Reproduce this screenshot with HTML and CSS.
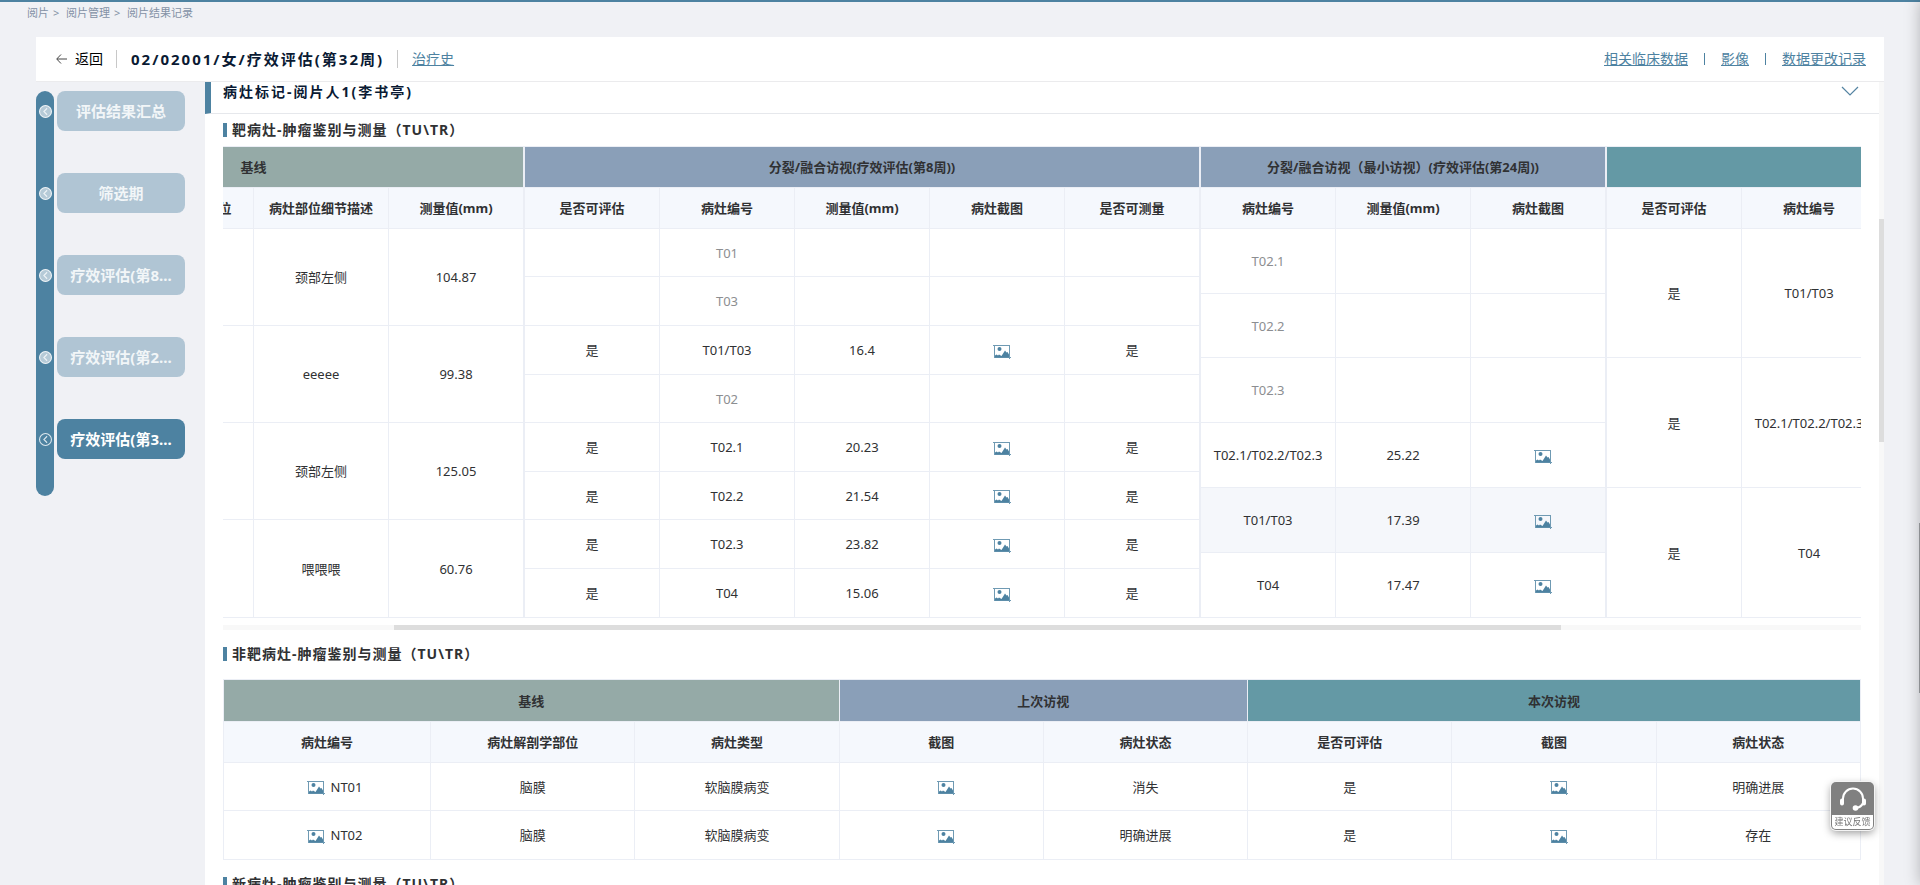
FILE: index.html
```html
<!DOCTYPE html>
<html lang="zh-CN">
<head>
<meta charset="utf-8">
<title>阅片结果记录</title>
<link rel="stylesheet" href="styles.css">
</head>
<body>
<svg class="sprite" aria-hidden="true">
  <symbol id="shot" viewBox="0 0 18 14">
    <path d="M0 .5H17M1.5 0V13M16.5 0V14M1 12.5H18" fill="none" stroke="#6f9ab3" stroke-width="1"/>
    <circle cx="6.5" cy="4" r="2" fill="#4d82a1"/>
    <path d="M2 12V10.500L3.500 9.500L5 10.500L6 9.500L8.500 11L12 5.500L13.500 7.500L14.500 7L16 9.500V12.500H2Z" fill="#4d82a1"/>
  </symbol>
  <symbol id="prev" viewBox="0 0 12 12">
    <circle cx="6" cy="6" r="5.500"/>
    <path d="M7.500 3L4.500 6L7.500 9"/>
  </symbol>
</svg>
<nav class="crumbs"><a href="#">阅片</a><span>&gt;</span><a href="#">阅片管理</a><span>&gt;</span><a href="#">阅片结果记录</a></nav>
<div class="page">
  <header class="bar">
    <button class="back"><svg width="11" height="10" viewBox="0 0 11 10"><path d="M11 5H1M5 .5L.700 5L5 9.500" fill="none" stroke="#444"/></svg>返回</button>
    <h1>02/02001/女/疗效评估(第32周)</h1>
    <a class="history" href="#">治疗史</a>
    <div class="links"><a href="#">相关临床数据</a><i></i><a href="#">影像</a><i></i><a href="#">数据更改记录</a></div>
  </header>
  <div class="body">
    <aside class="visits">
      <div class="rail">
        <svg><use href="#prev"/></svg><svg><use href="#prev"/></svg><svg><use href="#prev"/></svg><svg><use href="#prev"/></svg><svg class="on"><use href="#prev"/></svg>
      </div>
      <div class="tabs">
        <button>评估结果汇总</button>
        <button>筛选期</button>
        <button>疗效评估(第8...</button>
        <button>疗效评估(第2...</button>
        <button class="on">疗效评估(第3...</button>
      </div>
    </aside>
    <main class="content">
      <div class="scroll">
        <div class="reader">
          <h2>病灶标记-阅片人1(李书亭)</h2>
          <svg width="18" height="10" viewBox="0 0 18 10"><path d="M1 1L9 9L17 1" fill="none" stroke="#5584a2" stroke-width="1.200"/></svg>
        </div>
        <h3>靶病灶-肿瘤鉴别与测量（TU\TR）</h3>
        <div class="strip" id="strip">
          <table class="t-base">
            <colgroup><col><col><col><col class="last"></colgroup>
            <thead><tr class="group base"><th colspan="4">基线</th></tr>
            <tr><th>病灶编号</th><th>病灶解剖学部位</th><th>病灶部位细节描述</th><th>测量值(mm)</th></tr></thead>
            <tbody>
            <tr><td></td><td></td><td>颈部左侧</td><td>104.87</td></tr>
            <tr><td></td><td></td><td>eeeee</td><td>99.38</td></tr>
            <tr><td></td><td></td><td>颈部左侧</td><td>125.05</td></tr>
            <tr><td></td><td></td><td>喂喂喂</td><td>60.76</td></tr>
            </tbody>
          </table>
          <table class="t-week8">
            <colgroup><col><col><col><col><col class="last"></colgroup>
            <thead><tr class="group past"><th colspan="5">分裂/融合访视(疗效评估(第8周))</th></tr>
            <tr><th>是否可评估</th><th>病灶编号</th><th>测量值(mm)</th><th>病灶截图</th><th>是否可测量</th></tr></thead>
            <tbody>
            <tr class="old"><td></td><td>T01</td><td></td><td></td><td></td></tr>
            <tr class="old"><td></td><td>T03</td><td></td><td></td><td></td></tr>
            <tr><td>是</td><td>T01/T03</td><td>16.4</td><td><svg class="shot"><use href="#shot"/></svg></td><td>是</td></tr>
            <tr class="old"><td></td><td>T02</td><td></td><td></td><td></td></tr>
            <tr><td>是</td><td>T02.1</td><td>20.23</td><td><svg class="shot"><use href="#shot"/></svg></td><td>是</td></tr>
            <tr><td>是</td><td>T02.2</td><td>21.54</td><td><svg class="shot"><use href="#shot"/></svg></td><td>是</td></tr>
            <tr><td>是</td><td>T02.3</td><td>23.82</td><td><svg class="shot"><use href="#shot"/></svg></td><td>是</td></tr>
            <tr><td>是</td><td>T04</td><td>15.06</td><td><svg class="shot"><use href="#shot"/></svg></td><td>是</td></tr>
            </tbody>
          </table>
          <table class="t-week24">
            <colgroup><col><col><col class="last"></colgroup>
            <thead><tr class="group past"><th colspan="3">分裂/融合访视（最小访视）(疗效评估(第24周))</th></tr>
            <tr><th>病灶编号</th><th>测量值(mm)</th><th>病灶截图</th></tr></thead>
            <tbody>
            <tr class="old"><td>T02.1</td><td></td><td></td></tr>
            <tr class="old"><td>T02.2</td><td></td><td></td></tr>
            <tr class="old"><td>T02.3</td><td></td><td></td></tr>
            <tr><td>T02.1/T02.2/T02.3</td><td>25.22</td><td><svg class="shot"><use href="#shot"/></svg></td></tr>
            <tr class="hover"><td>T01/T03</td><td>17.39</td><td><svg class="shot"><use href="#shot"/></svg></td></tr>
            <tr><td>T04</td><td>17.47</td><td><svg class="shot"><use href="#shot"/></svg></td></tr>
            </tbody>
          </table>
          <table class="t-now">
            <colgroup><col><col><col><col><col class="last"></colgroup>
            <thead><tr class="group now"><th colspan="5"></th></tr>
            <tr><th>是否可评估</th><th>病灶编号</th><th></th><th></th><th></th></tr></thead>
            <tbody>
            <tr><td>是</td><td>T01/T03</td><td></td><td></td><td></td></tr>
            <tr><td>是</td><td>T02.1/T02.2/T02.3</td><td></td><td></td><td></td></tr>
            <tr><td>是</td><td>T04</td><td></td><td></td><td></td></tr>
            </tbody>
          </table>
        </div>
        <div class="hbar"><div class="thumb"></div></div>
        <h3>非靶病灶-肿瘤鉴别与测量（TU\TR）</h3>
        <table class="nontarget">
          <colgroup><col class="first"><col><col><col><col><col><col><col></colgroup>
          <thead>
          <tr class="group"><th class="base" colspan="3">基线</th><th class="past" colspan="2">上次访视</th><th class="now" colspan="3">本次访视</th></tr>
          <tr><th>病灶编号</th><th>病灶解剖学部位</th><th>病灶类型</th><th>截图</th><th>病灶状态</th><th>是否可评估</th><th>截图</th><th>病灶状态</th></tr>
          </thead>
          <tbody>
          <tr><td class="num"><svg class="shot"><use href="#shot"/></svg>NT01</td><td>脑膜</td><td>软脑膜病变</td><td><svg class="shot"><use href="#shot"/></svg></td><td>消失</td><td>是</td><td><svg class="shot"><use href="#shot"/></svg></td><td>明确进展</td></tr>
          <tr><td class="num"><svg class="shot"><use href="#shot"/></svg>NT02</td><td>脑膜</td><td>软脑膜病变</td><td><svg class="shot"><use href="#shot"/></svg></td><td>明确进展</td><td>是</td><td><svg class="shot"><use href="#shot"/></svg></td><td>存在</td></tr>
          </tbody>
        </table>
        <h3>新病灶-肿瘤鉴别与测量（TU\TR）</h3>
      </div>
      <div class="vbar"><div class="thumb"></div></div>
    </main>
  </div>
</div>
<button class="feedback">
  <svg width="28" height="26" viewBox="0 0 28 26" fill="none" stroke="#fff" stroke-linecap="round">
    <path d="M4 14V12.500A10 10 0 0 1 24 12.500V14" stroke-width="2"/>
    <path d="M3 14.500V17.500M25 14.500V17.500" stroke-width="4"/>
    <path d="M24 17Q22 21.500 17 22" stroke-width="2"/>
    <circle cx="16.500" cy="22" r="2.800" fill="#fff" stroke="none"/>
  </svg>
  <span>建议反馈</span>
</button>
<div class="drawer"></div>
<div class="grip"></div>
<script>document.getElementById('strip').scrollLeft = 239;</script>
</body>
</html>
```
FILE: styles.css
```css
* { box-sizing: border-box; }
body {
  margin: 0;
  height: 100vh;
  overflow: hidden;
  display: flex;
  flex-direction: column;
  border-top: 2px solid #4d82a1;
  background: #f0f1f5;
  color: #303133;
  font: 13px/20px "Noto Sans", "Noto Sans CJK SC", sans-serif;
}
h1, h2, h3 { margin: 0; font-weight: 700; }
button { border: 0; padding: 0; background: none; font: inherit; color: inherit; cursor: pointer; }
a { color: #4d82a1; }
.sprite { position: absolute; width: 0; height: 0; }

.crumbs {
  display: flex;
  padding: 1px 27px 14px;
  font-size: 11px;
  color: #8492a6;
}
.crumbs a { color: inherit; text-decoration: none; }
.crumbs span { width: 17px; padding-left: 4px; }

.page {
  flex: 1;
  min-height: 0;
  display: flex;
  flex-direction: column;
  margin: 0 36px;
}
.bar {
  flex: none;
  height: 45px;
  display: flex;
  align-items: center;
  padding: 0 18px 0 20px;
  background: #fff;
  border-bottom: 1px solid #ebebed;
  font-size: 14px;
}
.back { display: flex; align-items: center; gap: 8px; color: #000; }
.bar h1 {
  margin-left: 13px;
  padding-left: 14px;
  border-left: 1px solid #c8c8c8;
  font-size: 15px;
  line-height: 18px;
  letter-spacing: 2px;
  color: #0a1a33;
}
.history {
  margin-left: 13px;
  padding-left: 14px;
  border-left: 1px solid #c8c8c8;
  line-height: 18px;
}
.links { margin-left: auto; display: flex; align-items: center; gap: 16px; }
.links i { width: 1px; height: 12px; background: #4d82a1; }

.body { flex: 1; min-height: 0; display: flex; }
.visits {
  flex: none;
  width: 169px;
  display: flex;
  align-items: flex-start;
  gap: 3px;
  padding-top: 9px;
}
.rail {
  width: 18px;
  display: flex;
  flex-direction: column;
  align-items: center;
  gap: 69px;
  padding: 14px 0 50px;
  border-radius: 9px;
  background: #4d82a1;
}
.rail svg { width: 13px; height: 13px; fill: #b5cad7; stroke: #eef3f6; }
.rail svg.on { fill: none; stroke: #dce7ed; }
.tabs { display: flex; flex-direction: column; gap: 42px; }
.tabs button {
  width: 128px;
  height: 40px;
  border-radius: 8px;
  background: #b0c5d4;
  color: #f2f6f8;
  font-size: 15px;
  font-weight: 700;
}
.tabs .on { background: #4d82a1; color: #fff; }

.content { flex: 1; min-width: 0; display: flex; background: #fff; overflow: hidden; }
.scroll { flex: 1; min-width: 0; padding-right: 18px; }
.vbar { width: 5px; background: #f8f8f8; padding-top: 137px; }
.vbar .thumb { height: 223px; background: #ddd; }

.reader {
  height: 32px;
  display: flex;
  justify-content: space-between;
  align-items: flex-start;
  margin-right: -18px;
  padding: 0 20px 0 12px;
  border-left: 6px solid #4d82a1;
  border-bottom: 1px solid #e6e8ec;
}
.reader h2 { font-size: 14px; letter-spacing: 2px; color: #0a1a33; }
.reader svg { margin-top: 4px; }
h3 {
  display: flex;
  align-items: center;
  height: 32px;
  margin-left: 18px;
  font-size: 14px;
  letter-spacing: 1px;
}
h3::before { content: ""; width: 4px; height: 14px; margin-right: 5px; background: #4d82a1; }

.strip { display: flex; margin-left: 18px; overflow: hidden; }
table {
  flex: none;
  table-layout: fixed;
  border-collapse: separate;
  border-spacing: 0;
  border-top: 1px solid #ebeef5;
}
col { width: 135px; }
.last { width: 136px; }
.t-base { width: 541px; }
.t-week8 { width: 676px; }
.t-week24 { width: 406px; }
.t-now { width: 676px; }
th, td {
  padding: 0;
  text-align: center;
  border-right: 1px solid #ebeef5;
  border-bottom: 1px solid #ebeef5;
}
.strip tr > :last-child { border-right-width: 2px; }
th { height: 41px; background: #f5f8fd; font-weight: 700; }
.base, .base th { background: #95aaa7; }
.past, .past th { background: #8a9fb8; }
.now, .now th { background: #6499a5; }
.t-base td { height: 97px; }
.t-base tr:last-child td { height: 98px; }
.t-week8 td { height: 49px; }
.t-week8 .old td { height: 48px; }
.t-week8 .old + .old td { height: 49px; }
.t-week8 tr:nth-child(6) td { height: 48px; }
.t-week24 td { height: 65px; }
.t-week24 tr:nth-child(2) td { height: 64px; }
.t-now td { height: 130px; }
.t-now tr:first-child td { height: 129px; }
.old td { color: #8c8e91; }
.hover td { background: #f5f7fb; }
.shot { width: 18px; height: 14px; margin-left: 10px; vertical-align: middle; }

.hbar { height: 5px; margin: 7px 0 8px 18px; padding-left: 171px; background: #f8f8f8; }
.hbar .thumb { width: 1167px; max-width: 80%; height: 5px; background: #ddd; }

.nontarget {
  width: calc(100% - 18px);
  margin: 9px 0 8px 18px;
  border-left: 1px solid #ebeef5;
}
.nontarget col { width: auto; }
.nontarget .first { width: 207px; }
.nontarget td { height: 49px; }
.nontarget tr:first-child td { height: 48px; }
.nontarget .group th { height: 42px; }
.nontarget .num { padding-left: 5px; }
.num .shot { margin-right: 6px; }

.feedback {
  position: fixed;
  right: 46px;
  bottom: 55px;
  width: 43px;
  height: 48px;
  display: flex;
  flex-direction: column;
  align-items: center;
  justify-content: space-between;
  padding: 4px 1px 1px;
  border-radius: 5px;
  background: #808080;
  box-shadow: 0 0 0 1px #f4f4f4, 0 3px 8px rgba(0, 0, 0, .4);
}
.feedback span {
  width: 100%;
  border-radius: 0 0 4px 4px;
  background: #fff;
  color: #777;
  font-size: 9px;
  line-height: 14px;
}
.drawer {
  position: fixed;
  top: 0;
  bottom: 0;
  left: 100%;
  width: 20px;
  box-shadow: 0 0 16px rgba(0, 0, 0, .26);
}
.grip { position: fixed; right: 0; top: 523px; width: 1px; height: 170px; background: #8d8f92; }
```
